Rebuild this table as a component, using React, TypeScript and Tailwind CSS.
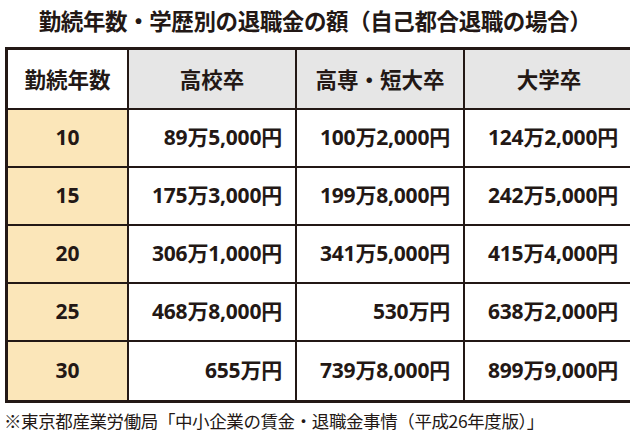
import React from "react";

const rows: [string, string, string, string][] = [
  ["10", "89万5,000円", "100万2,000円", "124万2,000円"],
  ["15", "175万3,000円", "199万8,000円", "242万5,000円"],
  ["20", "306万1,000円", "341万5,000円", "415万4,000円"],
  ["25", "468万8,000円", "530万円", "638万2,000円"],
  ["30", "655万円", "739万8,000円", "899万9,000円"],
];

const jp = { fontFamily: '"Noto Sans CJK JP", "Noto Sans", sans-serif' };
const num = { fontFamily: '"Open Sans", "Noto Sans CJK JP", sans-serif' };

export default function App() {
  return (
    <div className="w-[630px] h-[441px] bg-white overflow-hidden text-[#231815]" style={jp}>
      <div className="h-[47px] flex items-center justify-center pb-[6px] text-[22.5px] font-bold tracking-[-0.4px]">
        勤続年数・学歴別の退職金の額（自己都合退職の場合）
      </div>
      <div className="ml-[5px] w-[640px] border-t-[3px] border-l-[3px] border-b-[3px] border-[#231815]">
        <div className="grid grid-cols-[121px_168px_168px_168px] h-[60px] border-b-2 border-[#231815]">
          <div className="bg-white border-r-2 border-[#231815] flex items-center justify-center text-[21.5px] font-bold">勤続年数</div>
          <div className="bg-[#e6e6e6] border-r-2 border-[#231815] flex items-center justify-center text-[21.5px] font-bold">高校卒</div>
          <div className="bg-[#e6e6e6] border-r-2 border-[#231815] flex items-center justify-center text-[21.5px] font-bold">高専・短大卒</div>
          <div className="bg-[#e6e6e6] flex items-center justify-center text-[21.5px] font-bold">大学卒</div>
        </div>
        {rows.map((r, i) => (
          <div
            key={r[0]}
            className={
              "grid grid-cols-[121px_168px_168px_168px] h-[58px] " +
              (i < rows.length - 1 ? "border-b-2 border-[#231815]" : "")
            }
          >
            <div className="bg-[#fbe6b9] border-r-2 border-[#231815] flex items-center justify-center text-[21px] font-bold" style={num}>
              {r[0]}
            </div>
            <div className="bg-white border-r-2 border-[#231815] flex items-center justify-end pr-[13px] text-[21px] font-bold tracking-[-0.2px]" style={num}>
              {r[1]}
            </div>
            <div className="bg-white border-r-2 border-[#231815] flex items-center justify-end pr-[13px] text-[21px] font-bold tracking-[-0.2px]" style={num}>
              {r[2]}
            </div>
            <div className="bg-white flex items-center justify-end pr-[15px] text-[21px] font-bold tracking-[-0.2px]" style={num}>
              {r[3]}
            </div>
          </div>
        ))}
      </div>
      <div className="pl-[4px] pt-[6px] text-[17.5px] leading-[24px] tracking-[-0.4px]">
        ※東京都産業労働局「中小企業の賃金・退職金事情（平成26年度版）」
      </div>
    </div>
  );
}
